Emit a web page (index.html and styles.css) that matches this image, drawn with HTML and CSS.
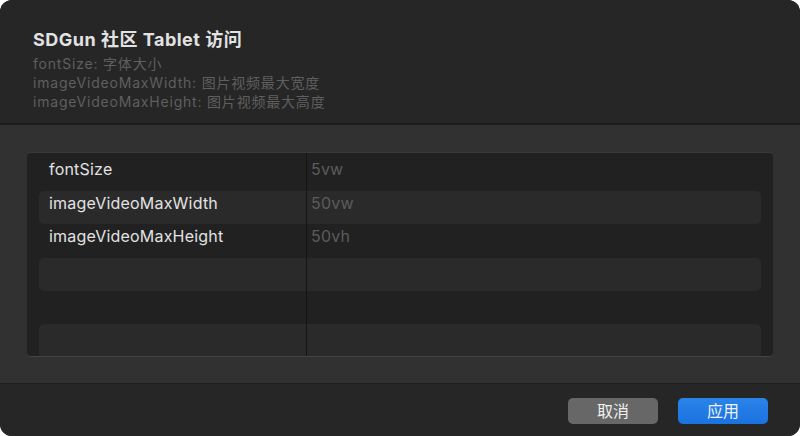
FILE: index.html
```html
<!DOCTYPE html>
<html lang="zh">
<head>
<meta charset="utf-8">
<link rel="stylesheet" href="styles.css">
</head>
<body>
<div class="window">
  <header class="head">
    <h1 class="title">SDGun 社区 Tablet 访问</h1>
    <p class="sub">fontSize: 字体大小</p>
    <p class="sub">imageVideoMaxWidth: 图片视频最大宽度</p>
    <p class="sub">imageVideoMaxHeight: 图片视频最大高度</p>
  </header>
  <main class="body">
    <div class="table">
      <div class="row"><span class="key">fontSize</span><span class="val">5vw</span></div>
      <div class="row alt"><span class="key">imageVideoMaxWidth</span><span class="val">50vw</span></div>
      <div class="row"><span class="key">imageVideoMaxHeight</span><span class="val">50vh</span></div>
      <div class="row alt"><span class="key"></span><span class="val"></span></div>
      <div class="row"><span class="key"></span><span class="val"></span></div>
      <div class="row alt"><span class="key"></span><span class="val"></span></div>
    </div>
  </main>
  <footer class="foot">
    <button class="btn cancel">取消</button>
    <button class="btn apply">应用</button>
  </footer>
</div>
</body>
</html>
```
FILE: styles.css
```css
* { box-sizing: border-box; }
html, body { margin: 0; padding: 0; }
body {
  background: #ffffff;
  font-family: Inter, "Noto Sans CJK SC", sans-serif;
}
.window {
  width: 800px;
  height: 436px;
  border-radius: 12px;
  overflow: hidden;
  background: #262626;
  display: flex;
  flex-direction: column;
}
.head {
  height: 126px;
  padding: 28px 33px 0;
  background: #262626;
  border-bottom: 2px solid #1c1c1c;
}
.title {
  margin: 0 0 3px;
  font-size: 18px;
  line-height: 23px;
  font-weight: 700;
  letter-spacing: 0.5px;
  color: #e2e2e2;
}
.sub {
  margin: 0;
  font-size: 14px;
  line-height: 19px;
  letter-spacing: 0.8px;
  color: #5f5f5f;
}
.body {
  flex: 1;
  background: #313131;
  padding: 27px 27px 26px;
}
.table {
  position: relative;
  height: 205px;
  background: #212121;
  border-radius: 4px;
  border-top: 1px solid #393939;
  border-bottom: 1px solid #444444;
  padding: 4px 12px 0;
  overflow: hidden;
}
.table::after {
  content: "";
  position: absolute;
  top: 0;
  bottom: 0;
  left: 279px;
  width: 1px;
  background: #151515;
}
.row {
  display: grid;
  grid-template-columns: 267px 1fr;
  height: 33.4px;
  align-items: start;
  padding-top: 2px;
  font-size: 16px;
  line-height: 20px;
  letter-spacing: 0.2px;
  border-radius: 5px;
}
.row.alt { background: #2a2a2a; }
.key { padding-left: 10px; color: #e2e2e2; }
.val { padding-left: 5px; color: #5c5c5c; }
.foot {
  height: 53px;
  border-top: 1px solid #1e1e1e;
  background: #262626;
  display: flex;
  justify-content: flex-end;
  align-items: center;
  gap: 20px;
  padding: 0 32px 0 0;
}
.btn {
  width: 90px;
  height: 26px;
  border: none;
  border-radius: 5px;
  font-family: Inter, "Noto Sans CJK SC", sans-serif;
  font-size: 16px;
  line-height: 26px;
  color: #f0f0f0;
  padding: 0;
  margin-top: 1px;
}
.cancel { background: #676767; }
.apply { background: linear-gradient(#2a84ea, #1a72df); }
```
